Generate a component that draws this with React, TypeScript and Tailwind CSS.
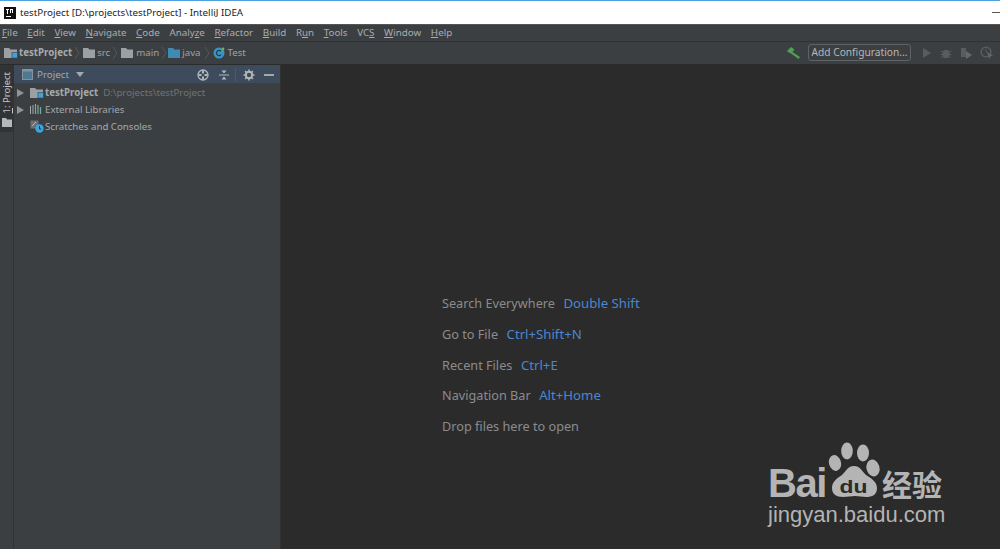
import React from 'react';

const font = '[font-family:"Noto_Sans","Open_Sans",sans-serif]';

const menus: [string, string, string][] = [
  ['', 'F', 'ile'],
  ['', 'E', 'dit'],
  ['', 'V', 'iew'],
  ['', 'N', 'avigate'],
  ['', 'C', 'ode'],
  ['Analy', 'z', 'e'],
  ['', 'R', 'efactor'],
  ['', 'B', 'uild'],
  ['R', 'u', 'n'],
  ['', 'T', 'ools'],
  ['VC', 'S', ''],
  ['', 'W', 'indow'],
  ['', 'H', 'elp'],
];

const hints = [
  { label: 'Search Everywhere', key: 'Double Shift' },
  { label: 'Go to File', key: 'Ctrl+Shift+N' },
  { label: 'Recent Files', key: 'Ctrl+E' },
  { label: 'Navigation Bar', key: 'Alt+Home' },
  { label: 'Drop files here to open', key: '' },
];

const Folder = ({ color = '#9aa0a4', badge = false }: { color?: string; badge?: boolean }) => (
  <svg width={badge ? 14 : 12} height="11" viewBox={badge ? '0 0 14 11' : '0 0 12 11'} className="shrink-0">
    <path d={badge ? 'M0 1h5l1.5 1.5H13V11H0z' : 'M0 1h5l1.5 1.5H12V11H0z'} fill={color} />
    {badge && <rect x="8" y="5.5" width="5.5" height="5.5" fill="#3aa5e0" stroke="#3c3f41" strokeWidth="0.6" />}
  </svg>
);

const Chevron = () => (
  <svg width="6" height="14" viewBox="0 0 6 14" className="shrink-0">
    <path d="M1 1l4 6-4 6" fill="none" stroke="#55585a" strokeWidth="1" />
  </svg>
);

const Arrow = () => (
  <svg width="7" height="8" viewBox="0 0 7 8" className="shrink-0">
    <path d="M0 0l7 4-7 4z" fill="#8f9497" />
  </svg>
);

const App: React.FC = () => {
  return (
    <div className={`w-[1000px] h-[549px] overflow-hidden flex flex-col relative bg-[#2b2b2b] ${font}`}>
      {/* window title */}
      <div className="h-[24px] shrink-0 bg-white border-t border-[#4fa3e3] flex items-center pl-[4px]">
        <svg width="12" height="12" viewBox="0 0 12 12" className="shrink-0">
          <rect width="12" height="12" fill="#111" />
          <rect x="2" y="9" width="5" height="1" fill="#fff" />
          <path d="M2 2h3v1H4v4H3V3H2zM6 2h3v4H8V3H7v3H6z" fill="#fff" />
        </svg>
        <span className="ml-[4px] text-[9.8px] text-[#222] leading-none">testProject [D:\projects\testProject] - IntelliJ IDEA</span>
        <div className="ml-auto w-[8px] h-px bg-[#555]" />
      </div>

      {/* menu bar */}
      <div className="h-[17px] shrink-0 bg-[#3c3f41] border-t border-[#555] flex items-center pl-[2px] gap-[9.6px] text-[9.8px] leading-none text-[#a8adb0]">
        {menus.map(([a, u, b]) => (
          <span key={a + u + b}>
            {a}
            <span className="underline">{u}</span>
            {b}
          </span>
        ))}
      </div>

      {/* navigation bar */}
      <div className="h-[24px] shrink-0 bg-[#3c3f41] border-t border-[#323232] border-b border-b-[#2b2b2b] flex items-center pl-[4px] pb-[1px] text-[#9ea3a6] text-[9.7px] leading-none">
        <Folder badge />
        <span className="ml-[1px] font-bold text-[#a5aaad]">testProject</span>
        <span className="ml-[2px] mr-[3px]"><Chevron /></span>
        <Folder />
        <span className="ml-[2px]">src</span>
        <span className="ml-[2px] mr-[3px]"><Chevron /></span>
        <Folder />
        <span className="ml-[3px]">main</span>
        <span className="ml-[2px] mr-[1px]"><Chevron /></span>
        <Folder color="#3f8bb3" />
        <span className="ml-[2px]">java</span>
        <span className="ml-[3px] mr-[3px]"><Chevron /></span>
        <svg width="12" height="12" viewBox="0 0 12 12" className="shrink-0">
          <circle cx="6" cy="6" r="5.5" fill="#3a95c4" />
          <path d="M8 4.2A2.6 2.6 0 1 0 8 7.8" fill="none" stroke="#2b3a42" strokeWidth="1.3" />
          <circle cx="10" cy="2" r="1.4" fill="#6fb544" />
        </svg>
        <span className="ml-[3px]">Test</span>

        <div className="ml-auto flex items-center">
          <svg width="13" height="12" viewBox="0 0 13 12" className="shrink-0">
            <path d="M0 4l4-4 3.5 2.5-2 2.5 7.5 5-1.5 2L4 6.5 2.5 6z" fill="#4f9e56" />
          </svg>
          <div className="ml-[8px] h-[17px] w-[103px] border border-[#606366] rounded-[3px] flex items-center justify-center text-[10.2px] text-[#b3b7ba] whitespace-nowrap">
            Add Configuration...
          </div>
          <div className="ml-[10px] mr-[6px] flex items-center gap-[7px]">
            <svg width="12" height="12" viewBox="0 0 12 12"><path d="M2 1l8 5-8 5z" fill="#595c5e" /></svg>
            <svg width="12" height="12" viewBox="0 0 12 12"><ellipse cx="6" cy="7" rx="3.6" ry="4.3" fill="#595c5e" /><path d="M0.5 4l3 1.5M11.5 4l-3 1.5M0.5 7.5h3M8.5 7.5h3M1 11l2.5-2M11 11l-2.5-2" stroke="#595c5e" /></svg>
            <svg width="14" height="12" viewBox="0 0 14 12"><path d="M2 1h5v9H2z" fill="#595c5e" /><path d="M7 4l6 4-6 4z" fill="#65686a" /></svg>
            <svg width="14" height="13" viewBox="0 0 14 13"><circle cx="6" cy="6" r="4.8" fill="none" stroke="#595c5e" strokeWidth="1.6" /><path d="M6 3v3l2 1" fill="none" stroke="#595c5e" /><path d="M7 6l6 3.5-2.5.8L9.5 13z" fill="#65686a" /></svg>
          </div>
        </div>
      </div>

      <div className="flex-1 min-h-0 flex">
        {/* tool window strip */}
        <div className="w-[14px] shrink-0 bg-[#3c3f41] border-r border-[#323232]">
          <div className="h-[67px] bg-[#313335] flex flex-col items-center pt-[7px]">
            <span className="[writing-mode:vertical-rl] rotate-180 text-[9.5px] leading-none text-[#c3c7ca] whitespace-nowrap">
              <span className="underline">1</span>: Project
            </span>
            <svg width="10" height="9" viewBox="0 0 10 9" className="mt-[5px] shrink-0">
              <path d="M0 0h4l1 1.5h5V9H0z" fill="#b4b8bb" />
            </svg>
          </div>
        </div>

        {/* project panel */}
        <div className="w-[267px] shrink-0 bg-[#3c3f41] border-r border-[#323232] flex flex-col">
          <div className="h-[18px] shrink-0 bg-[#3d4b5c] flex items-center pl-[8px] pr-[6px] pt-[1px] text-[9.8px] text-[#a4a9ac] leading-none">
            <svg width="11" height="11" viewBox="0 0 11 11" className="shrink-0">
              <rect x="0.5" y="0.5" width="10" height="10" fill="#4b7a92" stroke="#8a9196" />
              <rect x="0.5" y="0.5" width="10" height="2" fill="#8a9196" />
            </svg>
            <span className="ml-[4px]">Project</span>
            <svg width="8" height="5" viewBox="0 0 8 5" className="ml-[7px]"><path d="M0 0h8L4 5z" fill="#a4a9ac" /></svg>
            <div className="ml-auto flex items-center">
              <svg width="12" height="12" viewBox="0 0 12 12">
                <circle cx="6" cy="6" r="5" fill="none" stroke="#b4b8bb" strokeWidth="1.3" />
                <path d="M6 1.5v3M6 7.5v3M1.5 6h3M7.5 6h3" stroke="#b4b8bb" strokeWidth="2" />
              </svg>
              <svg width="10" height="12" viewBox="0 0 10 12" className="ml-[10px]">
                <path d="M0 6h10" stroke="#b4b8bb" />
                <path d="M5 4.5L2.5 1.5h5zM5 7.5l-2.5 3h5z" fill="#b4b8bb" />
              </svg>
              <div className="ml-[6px] w-px h-[14px] bg-[#4c5a6a]" />
              <svg width="12" height="12" viewBox="0 0 12 12" className="ml-[7px]">
                <circle cx="6" cy="6" r="3.2" fill="none" stroke="#b4b8bb" strokeWidth="2" />
                <path d="M6 0.5v2.2M6 9.3v2.2M0.5 6h2.2M9.3 6h2.2M2.1 2.1l1.6 1.6M8.3 8.3l1.6 1.6M9.9 2.1L8.3 3.7M3.7 8.3L2.1 9.9" stroke="#b4b8bb" strokeWidth="1.5" />
              </svg>
              <div className="ml-[9px] w-[10px] h-[2px] bg-[#a4a9ac]" />
            </div>
          </div>

          <div className="pt-[1px] text-[9.7px] leading-none text-[#a4a9ac]">
            <div className="h-[17px] flex items-center pl-[3px]">
              <Arrow />
              <span className="ml-[6px]"><Folder badge /></span>
              <span className="ml-[1px] font-bold">testProject</span>
              <span className="ml-[5px] text-[#6f7477]">D:\projects\testProject</span>
            </div>
            <div className="h-[17px] flex items-center pl-[3px]">
              <Arrow />
              <svg width="13" height="11" viewBox="0 0 13 11" className="ml-[6px] shrink-0">
                <path d="M0.5 2v8M3 1v9" stroke="#a4a9ac" strokeWidth="1" />
                <path d="M5.5 0v10" stroke="#6fa8c7" strokeWidth="1.2" />
                <path d="M8 1v9" stroke="#7fb069" strokeWidth="1.2" />
                <path d="M10.5 3v7" stroke="#6fa8c7" strokeWidth="1.2" />
              </svg>
              <span className="ml-[2px]">External Libraries</span>
            </div>
            <div className="h-[17px] flex items-center pl-[16px]">
              <svg width="14" height="13" viewBox="0 0 14 13" className="shrink-0">
                <rect x="0.5" y="0.5" width="8" height="8" fill="#6c7073" />
                <path d="M2 6l4-4" stroke="#b4b8bb" />
                <circle cx="9.5" cy="8.5" r="4.2" fill="#3aa5e0" />
                <path d="M9.5 6v3h1.8" fill="none" stroke="#27353d" />
              </svg>
              <span className="ml-[1px]">Scratches and Consoles</span>
            </div>
          </div>
        </div>

        {/* editor placeholder */}
        <div className="flex-1 relative bg-[#2b2b2b] pl-[161px] pt-[229px] text-[12.7px] leading-[18px]">
          {hints.map((h) => (
            <div key={h.label} className="h-[30.75px] flex items-baseline">
              <span className="text-[#8b8b8b]">{h.label}</span>
              {h.key && <span className="ml-[8.5px] text-[13.2px] text-[#4a87d0]">{h.key}</span>}
            </div>
          ))}
        </div>
      </div>

      {/* baidu watermark */}
      <div className="absolute left-[768px] top-[442px] w-[180px] h-[90px] text-[#b4b4b4]">
        <span className="absolute left-0 top-[21px] text-[40px] leading-[40px] font-bold tracking-[-1.5px] [font-family:'Liberation_Sans',sans-serif]">Bai</span>
        <svg width="60" height="56" viewBox="0 0 60 56" className="absolute left-[60px] top-0">
          <ellipse cx="7" cy="21" rx="6" ry="8" fill="#b4b4b4" transform="rotate(-15 7 21)" />
          <ellipse cx="19" cy="9" rx="5.8" ry="8.5" fill="#b4b4b4" />
          <ellipse cx="35" cy="11" rx="6" ry="8.5" fill="#b4b4b4" />
          <ellipse cx="45" cy="26" rx="6.5" ry="8.5" fill="#b4b4b4" transform="rotate(-15 45 26)" />
          <path d="M26 24c6 0 8 5 12 9 5 3 11 7 11 13 0 7-5 9-11 9-4 0-7-1-11-1s-7 1-12 1c-7 0-11-3-11-9 0-6 5-10 10-13 4-4 6-9 12-9z" fill="#b4b4b4" />
        </svg>
        <span className="absolute left-[58px] top-[36px] w-[55px] text-center text-[18px] leading-[18px] font-bold scale-x-[1.27] text-[#2b2b2b] [font-family:'Liberation_Sans',sans-serif]">du</span>
        <span className="absolute left-[114px] top-[23px] text-[30px] leading-[36px] font-bold [font-family:'Noto_Sans_CJK_SC',sans-serif] whitespace-nowrap">经验</span>
        <span className="absolute left-0 top-[60px] text-[22px] leading-[26px] whitespace-nowrap [font-family:'Liberation_Sans',sans-serif]">jingyan.baidu.com</span>
      </div>
    </div>
  );
};

export default App;
